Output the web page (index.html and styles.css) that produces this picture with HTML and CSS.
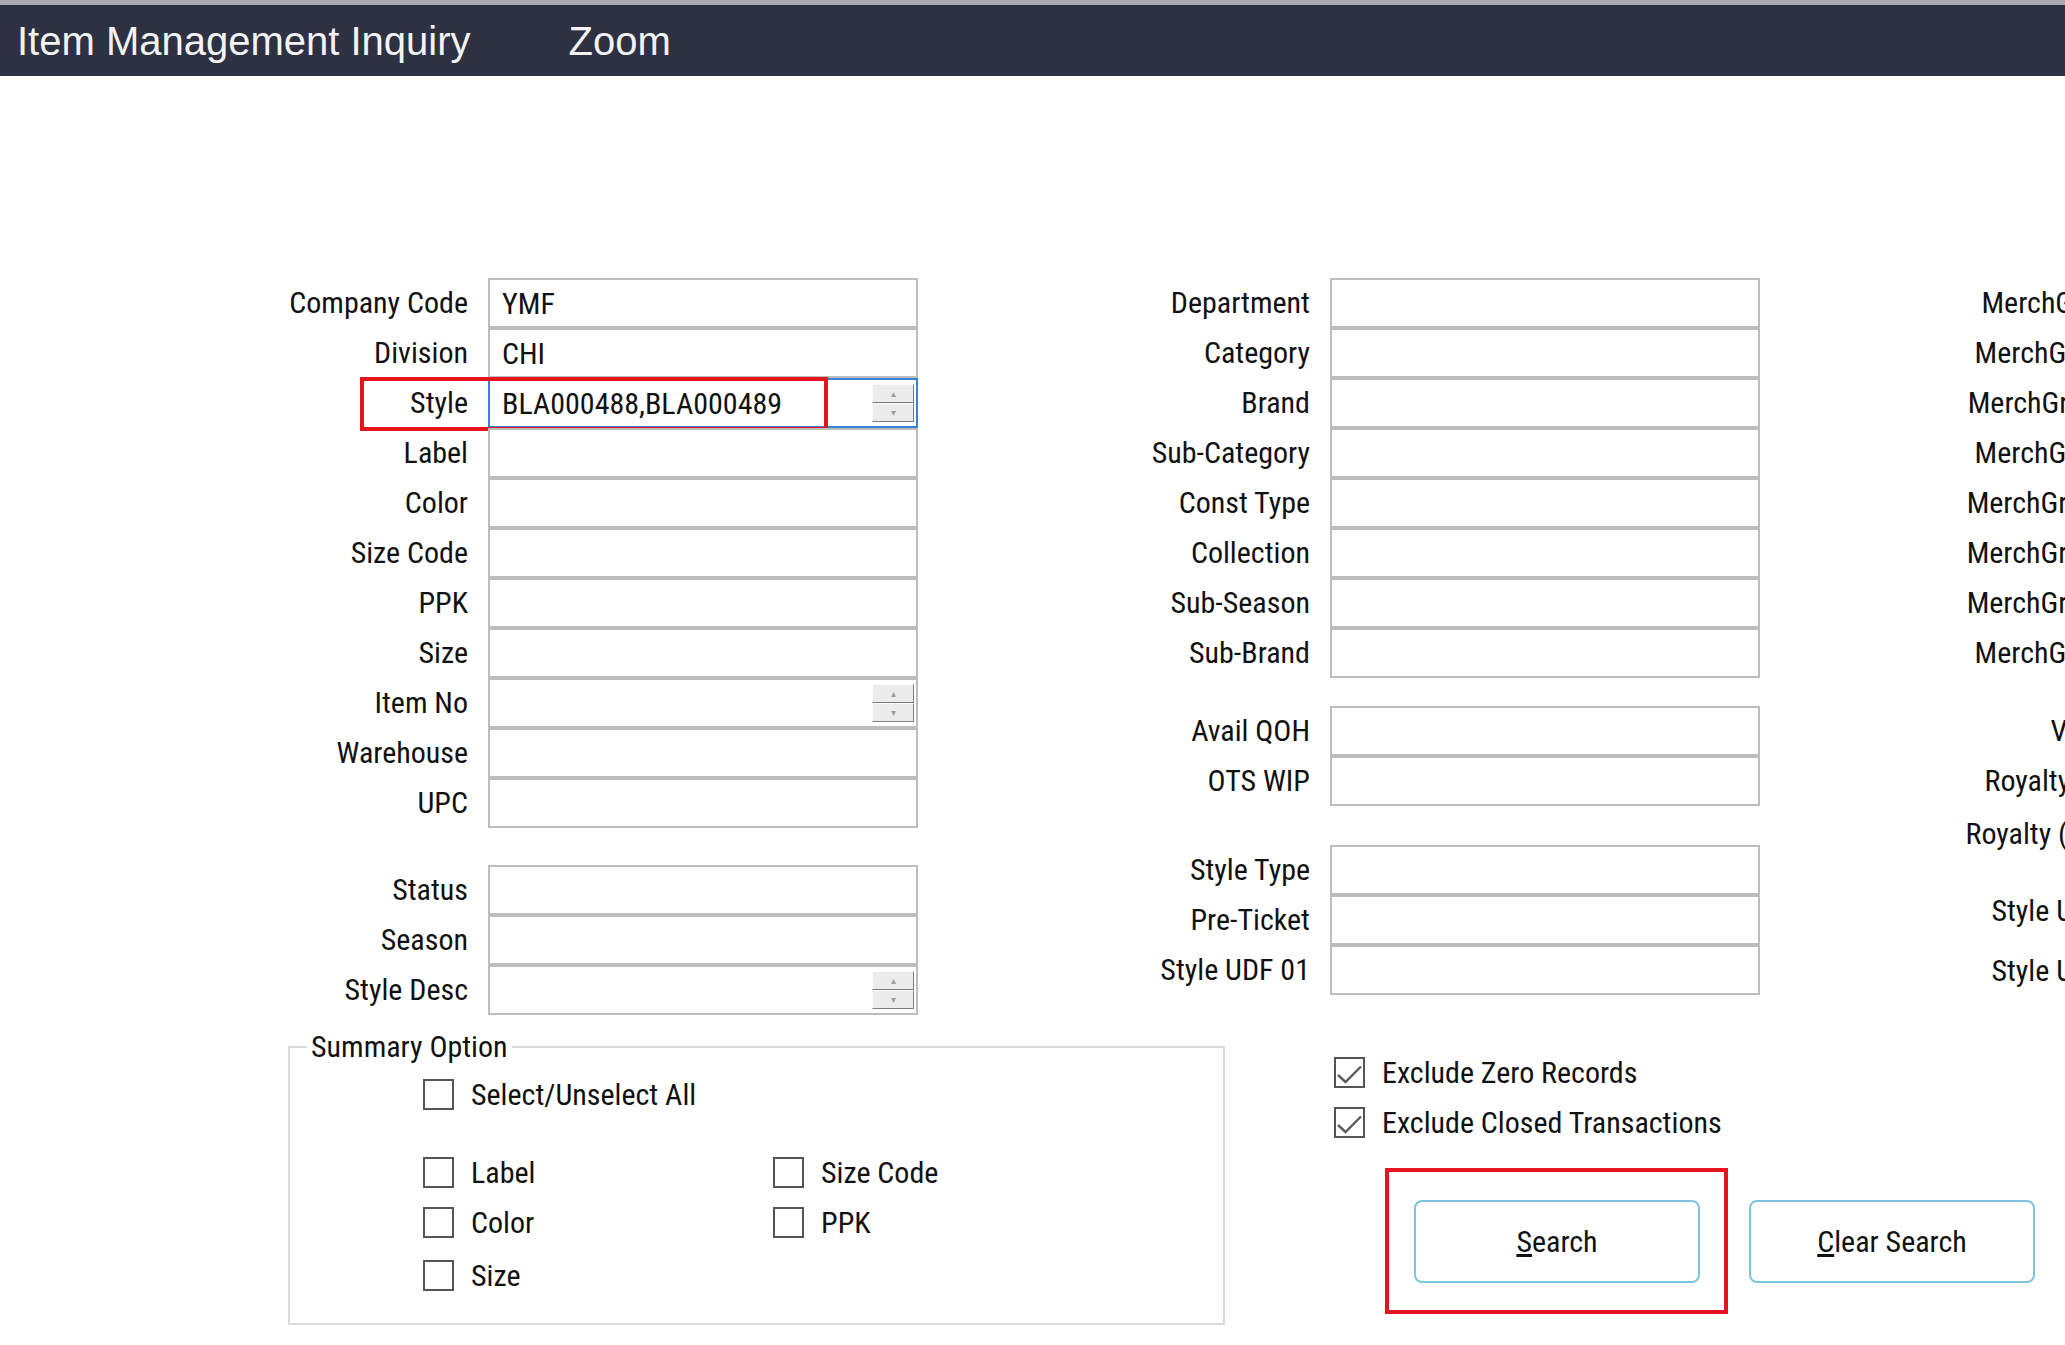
FILE: index.html
```html
<!DOCTYPE html>
<html lang="en">
<head>
<meta charset="utf-8">
<title>Item Management Inquiry</title>
<link rel="stylesheet" href="styles.css">
</head>
<body>
<header class="titlebar">
  <span class="title">Item Management Inquiry</span>
  <span class="title title-zoom">Zoom</span>
</header>
<main class="content">
  <div class="columns">
    <section class="col">
      <div class="group">
        <div class="field"><span class="label">Company Code</span><div class="input">YMF</div></div>
        <div class="field"><span class="label">Division</span><div class="input">CHI</div></div>
        <div class="field"><span class="label">Style</span><div class="input input-focus"><span class="val">BLA000488,BLA000489</span><span class="spin"><span class="spin-btn">&#9652;</span><span class="spin-btn">&#9662;</span></span></div><span class="hl hl-style"></span></div>
        <div class="field"><span class="label">Label</span><div class="input"></div></div>
        <div class="field"><span class="label">Color</span><div class="input"></div></div>
        <div class="field"><span class="label">Size Code</span><div class="input"></div></div>
        <div class="field"><span class="label">PPK</span><div class="input"></div></div>
        <div class="field"><span class="label">Size</span><div class="input"></div></div>
        <div class="field"><span class="label">Item No</span><div class="input"><span class="val"></span><span class="spin"><span class="spin-btn">&#9652;</span><span class="spin-btn">&#9662;</span></span></div></div>
        <div class="field"><span class="label">Warehouse</span><div class="input"></div></div>
        <div class="field"><span class="label">UPC</span><div class="input"></div></div>
      </div>
      <div class="group group-status">
        <div class="field"><span class="label">Status</span><div class="input"></div></div>
        <div class="field"><span class="label">Season</span><div class="input"></div></div>
        <div class="field"><span class="label">Style Desc</span><div class="input"><span class="val"></span><span class="spin"><span class="spin-btn">&#9652;</span><span class="spin-btn">&#9662;</span></span></div></div>
      </div>
    </section>
    <section class="col">
      <div class="group">
        <div class="field"><span class="label">Department</span><div class="input"></div></div>
        <div class="field"><span class="label">Category</span><div class="input"></div></div>
        <div class="field"><span class="label">Brand</span><div class="input"></div></div>
        <div class="field"><span class="label">Sub-Category</span><div class="input"></div></div>
        <div class="field"><span class="label">Const Type</span><div class="input"></div></div>
        <div class="field"><span class="label">Collection</span><div class="input"></div></div>
        <div class="field"><span class="label">Sub-Season</span><div class="input"></div></div>
        <div class="field"><span class="label">Sub-Brand</span><div class="input"></div></div>
      </div>
      <div class="group group-qoh">
        <div class="field"><span class="label">Avail QOH</span><div class="input"></div></div>
        <div class="field"><span class="label">OTS WIP</span><div class="input"></div></div>
      </div>
      <div class="group group-type">
        <div class="field"><span class="label">Style Type</span><div class="input"></div></div>
        <div class="field"><span class="label">Pre-Ticket</span><div class="input"></div></div>
        <div class="field"><span class="label">Style UDF 01</span><div class="input"></div></div>
      </div>
    </section>
    <section class="col col-right">
      <div class="group">
        <div class="field"><span class="label">MerchGroup 1</span><div class="input"></div></div>
        <div class="field"><span class="label">MerchGroup 2 </span><div class="input"></div></div>
        <div class="field"><span class="label">MerchGroup 3  </span><div class="input"></div></div>
        <div class="field"><span class="label">MerchGroup 4 </span><div class="input"></div></div>
        <div class="field"><span class="label">MerchGroup 05</span><div class="input"></div></div>
        <div class="field"><span class="label">MerchGroup 06</span><div class="input"></div></div>
        <div class="field"><span class="label">MerchGroup 07</span><div class="input"></div></div>
        <div class="field"><span class="label">MerchGroup 8 </span><div class="input"></div></div>
      </div>
      <div class="group group-qoh">
        <div class="field"><span class="label">Vendor  </span><div class="input"></div></div>
        <div class="field"><span class="label">Royalty Group</span><div class="input"></div></div>
        <div class="field field-r3"><span class="label">Royalty (Group)</span><div class="input"></div></div>
        <div class="field field-r4"><span class="label">Style UDF 02 </span><div class="input"></div></div>
        <div class="field field-r5"><span class="label">Style UDF 03 </span><div class="input"></div></div>
      </div>
    </section>
  </div>

  <div class="bottom">
    <fieldset class="summary">
      <legend class="summary-title">Summary Option</legend>
      <div class="opts">
        <label class="opt opt-all"><span class="cb"></span>Select/Unselect All</label>
        <label class="opt"><span class="cb"></span>Label</label>
        <label class="opt"><span class="cb"></span>Size Code</label>
        <label class="opt"><span class="cb"></span>Color</label>
        <label class="opt"><span class="cb"></span>PPK</label>
        <label class="opt"><span class="cb"></span>Size</label>
      </div>
    </fieldset>
    <div class="side">
      <label class="opt"><span class="cb"><svg viewBox="0 0 27 27" width="27" height="27"><polyline points="2,16 9.5,23 25,7.5" fill="none" stroke="#5c5c5c" stroke-width="2.4"/></svg></span>Exclude Zero Records</label>
      <label class="opt"><span class="cb"><svg viewBox="0 0 27 27" width="27" height="27"><polyline points="2,16 9.5,23 25,7.5" fill="none" stroke="#5c5c5c" stroke-width="2.4"/></svg></span>Exclude Closed Transactions</label>
      <div class="buttons">
        <button class="btn" type="button"><u>S</u>earch</button>
        <button class="btn" type="button"><u>C</u>lear Search</button>
        <span class="hl hl-search"></span>
      </div>
    </div>
  </div>
</main>
</body>
</html>
```

FILE: styles.css
```css
* { box-sizing: border-box; }
html, body { margin: 0; padding: 0; background: #fff; }
body {
  width: 2065px;
  height: 1345px;
  overflow: hidden;
  font-family: "Roboto Condensed", "Liberation Sans", Arial, sans-serif;
  font-size: 30px;
  color: #111;
}

.titlebar {
  height: 76px;
  border-top: 5px solid #a9abb1;
  background: #2e3142;
  color: #f3f3f3;
  display: flex;
  padding: 14px 0 0 17px;
  font-family: "Liberation Sans", Arial, sans-serif;
  font-size: 40px;
  line-height: 44px;
}
.title-zoom { margin-left: 98px; }

.content {
  position: relative;
  padding: 202px 0 0 200px;
}

.columns { display: flex; gap: 124px; }
.col { flex: none; width: 718px; }
.col-right { margin-left: -4px; }

.group-status { margin-top: 37px; }
.group-qoh { margin-top: 28px; }
.group-type { margin-top: 39px; }
.field-r3 { margin-top: 3px; }
.field-r4 { margin-top: 27px; }
.field-r5 { margin-top: 10px; }

.field {
  display: grid;
  grid-template-columns: 268px 430px;
  column-gap: 20px;
  height: 50px;
  position: relative;
}
.label {
  text-align: right;
  line-height: 50px;
  white-space: pre;
}
.input {
  border: 2px solid #bdbdbd;
  background: #fff;
  display: flex;
  align-items: center;
  padding-left: 12px;
  white-space: nowrap;
}
.input-focus { border-color: #3883d8; }
.val { flex: 1; }
.spin {
  width: 42px;
  height: 38px;
  margin-right: 2px;
  display: flex;
  flex-direction: column;
}
.spin-btn {
  flex: 1;
  background: #ececec;
  border: 1px solid;
  border-color: #fbfbfb #7b7b7b #7b7b7b #fbfbfb;
  color: #a0a0a0;
  font-size: 10px;
  line-height: 1;
  display: flex;
  align-items: center;
  justify-content: center;
}

.hl { position: absolute; border: 4px solid #e3161f; pointer-events: none; }
.hl-style { left: 160px; top: -1px; width: 468px; height: 54px; }

.bottom { display: flex; margin-top: 14px; padding-left: 88px; }

.summary {
  margin: 0;
  padding: 0;
  width: 937px;
  height: 296px;
  border: 2px solid #dadada;
}
.summary-title {
  margin-left: 17px;
  padding: 0 4px;
  line-height: 36px;
}
.opts {
  display: grid;
  grid-template-columns: 350px 350px;
  grid-template-rows: 78px 50px 53px 50px;
  align-items: start;
  padding: 4px 0 0 133px;
}
.opt-all { grid-column: 1 / -1; }
.opt {
  display: flex;
  align-items: center;
  gap: 17px;
  height: 50px;
  white-space: nowrap;
}
.cb {
  flex: none;
  width: 31px;
  height: 31px;
  border: 2px solid #555;
  background: #fff;
}
.cb svg { display: block; }

.side { margin-left: 109px; padding-top: 18px; }
.buttons {
  position: relative;
  display: flex;
  gap: 49px;
  margin-top: 53px;
  margin-left: 80px;
}
.btn {
  width: 286px;
  height: 83px;
  border: 2px solid #7cc4df;
  border-radius: 8px;
  background: #fff;
  font: inherit;
  color: #111;
  padding: 0;
}
.hl-search { left: -29px; top: -32px; width: 343px; height: 146px; }
```
